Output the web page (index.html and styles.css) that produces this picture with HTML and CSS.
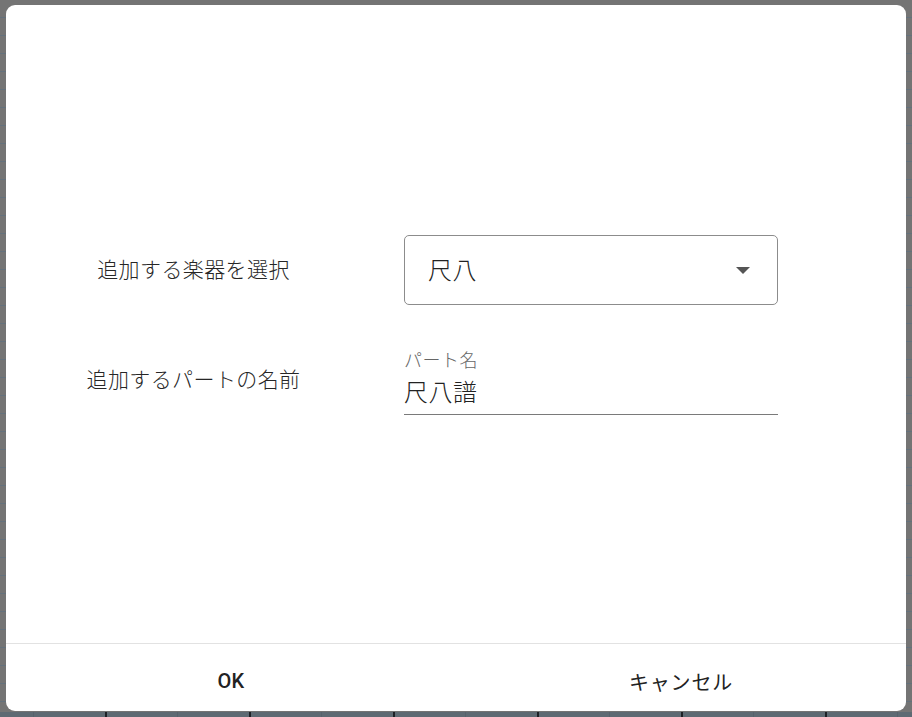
FILE: index.html
```html
<!DOCTYPE html>
<html lang="ja">
<head>
<meta charset="utf-8">
<title>楽器を追加</title>
<link rel="stylesheet" href="styles.css">
</head>
<body>
<div class="dialog">
  <div class="dialog-body">
    <div class="form">
      <div class="label">追加する楽器を選択</div>
      <div class="select">
        <span class="select-value">尺八</span>
        <span class="select-arrow"></span>
      </div>
      <div class="label">追加するパートの名前</div>
      <div class="textfield">
        <div class="textfield-label">パート名</div>
        <div class="textfield-value">尺八譜</div>
      </div>
    </div>
  </div>
  <div class="dialog-actions">
    <button class="action action-ok">OK</button>
    <button class="action">キャンセル</button>
  </div>
</div>
</body>
</html>
```
FILE: styles.css
```css
html, body {
  margin: 0;
  height: 717px;
  overflow: hidden;
}

body {
  box-sizing: border-box;
  padding: 5px 6px 6px 6px;
  font-family: Roboto, "Noto Sans CJK JP", sans-serif;
  background-color: #747474;
  background-image:
    repeating-linear-gradient(90deg, transparent 0 33px, #56626c 33px 34px, transparent 34px 105px, #1d2126 105px 107px, transparent 107px 144px),
    linear-gradient(#5e6a73, #5e6a73),
    repeating-linear-gradient(180deg, transparent 0 17px, #64717c 17px 18px);
  background-repeat: no-repeat, no-repeat, repeat;
  background-position: 0 712px, 0 712px, 0 0;
  background-size: 100% 5px, 100% 5px, auto;
}

.dialog {
  width: 900px;
  height: 706px;
  box-sizing: border-box;
  background: #ffffff;
  border-radius: 9px;
  display: flex;
  flex-direction: column;
  overflow: hidden;
}

.dialog-body {
  flex: 1;
  display: flex;
  align-items: center;
  padding-top: 1px;
}

.form {
  display: grid;
  grid-template-columns: 375px 374px;
  column-gap: 23px;
  row-gap: 40px;
  align-items: center;
}

.label {
  text-align: center;
  font-size: 21px;
  font-weight: 300;
  letter-spacing: 0.4px;
  color: #262626;
  line-height: 28px;
}

.select {
  height: 70px;
  box-sizing: border-box;
  border: 1px solid #8c8c8c;
  border-radius: 5px;
  display: flex;
  align-items: center;
  justify-content: space-between;
  padding: 2px 27px 0 23px;
}

.select-value {
  font-size: 24px;
  font-weight: 300;
  letter-spacing: 0.5px;
  color: #222;
  line-height: 28px;
}

.select-arrow {
  width: 0;
  height: 0;
  border-left: 7px solid transparent;
  border-right: 7px solid transparent;
  border-top: 7px solid #555;
}

.textfield {
  height: 70px;
  box-sizing: border-box;
  padding-top: 6px;
  border-bottom: 1px solid #7a7a7a;
}

.textfield-label {
  font-size: 18px;
  font-weight: 300;
  letter-spacing: 0.5px;
  line-height: 20px;
  color: #666;
}

.textfield-value {
  margin-top: 8px;
  font-size: 24px;
  font-weight: 300;
  letter-spacing: 0.5px;
  line-height: 28px;
  color: #222;
}

.dialog-actions {
  height: 67px;
  border-top: 1px solid #e2e2e2;
  display: flex;
}

.action {
  flex: 1;
  border: 0;
  background: transparent;
  font-family: Roboto, "Noto Sans CJK JP", sans-serif;
  font-weight: 400;
  font-size: 20px;
  letter-spacing: 0.8px;
  color: #222;
  padding: 7px 0 0 0;
  margin: 0;
}

.action-ok {
  font-weight: 500;
  letter-spacing: 0.3px;
}
```
